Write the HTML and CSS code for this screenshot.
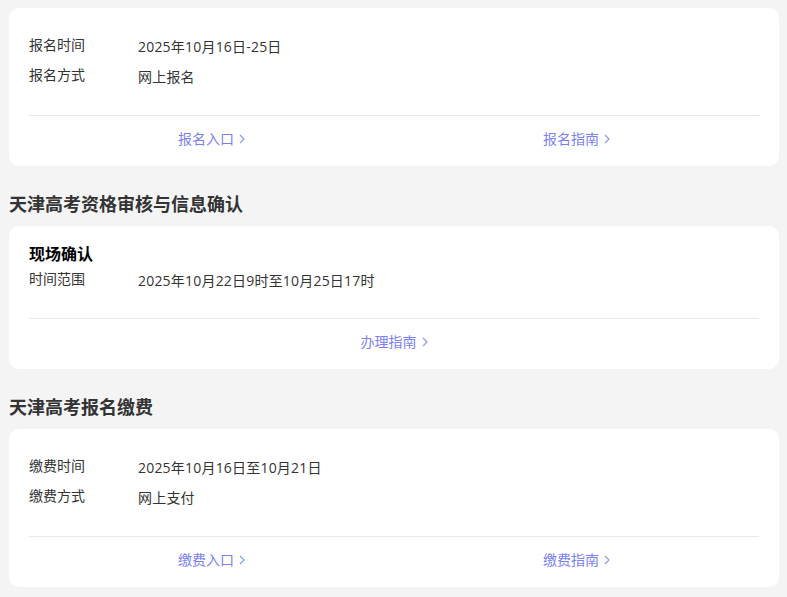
FILE: index.html
```html
<html>
<head>
<meta charset="utf-8">
<link rel="stylesheet" href="styles.css">
</head>
<body>

<div class="page">
    <div class="card">
        <div class="card-body">
            <div class="info-row">
                <div class="info-label">报名时间</div>
                <div class="info-value">2025年10月16日-25日</div>
            </div>
            <div class="info-row">
                <div class="info-label">报名方式</div>
                <div class="info-value">网上报名</div>
            </div>
        </div>
        <div class="card-links">
            <a class="card-link">报名入口<svg class="chevron" viewBox="0 0 6 10"><path d="M1 1 L5 5 L1 9"/></svg></a>
            <a class="card-link">报名指南<svg class="chevron" viewBox="0 0 6 10"><path d="M1 1 L5 5 L1 9"/></svg></a>
        </div>
    </div>

    <h2 class="section-title">天津高考资格审核与信息确认</h2>
    <div class="card">
        <div class="card-body card-body-titled">
            <div class="card-title">现场确认</div>
            <div class="info-row">
                <div class="info-label">时间范围</div>
                <div class="info-value">2025年10月22日9时至10月25日17时</div>
            </div>
        </div>
        <div class="card-links">
            <a class="card-link">办理指南<svg class="chevron" viewBox="0 0 6 10"><path d="M1 1 L5 5 L1 9"/></svg></a>
        </div>
    </div>

    <h2 class="section-title">天津高考报名缴费</h2>
    <div class="card">
        <div class="card-body">
            <div class="info-row">
                <div class="info-label">缴费时间</div>
                <div class="info-value">2025年10月16日至10月21日</div>
            </div>
            <div class="info-row">
                <div class="info-label">缴费方式</div>
                <div class="info-value">网上支付</div>
            </div>
        </div>
        <div class="card-links">
            <a class="card-link">缴费入口<svg class="chevron" viewBox="0 0 6 10"><path d="M1 1 L5 5 L1 9"/></svg></a>
            <a class="card-link">缴费指南<svg class="chevron" viewBox="0 0 6 10"><path d="M1 1 L5 5 L1 9"/></svg></a>
        </div>
    </div>
</div>

</body>
</html>
```

FILE: styles.css
```css
body {
    margin: 0;
    background-color: #f4f4f4;
    font-family: "Open Sans", "Noto Sans CJK SC", sans-serif;
    color: #333333;
}

.page {
    padding: 8px 8px 8px 9px;
}

.card {
    background-color: #ffffff;
    border-radius: 10px;
    padding: 0 20px;
}

.card-body {
    padding: 29px 0 28px;
    border-bottom: 1px solid #e8e8e8;
}

.card-body-titled {
    padding-top: 16px;
    padding-bottom: 27px;
}

.card-title {
    font-size: 16px;
    line-height: 24px;
    font-weight: bold;
    color: #000000;
    margin-bottom: 5px;
}

.info-row {
    display: flex;
    font-size: 14px;
    line-height: 20px;
}

.info-row + .info-row {
    margin-top: 10px;
}

.info-label {
    width: 109px;
    flex-shrink: 0;
    margin-top: -2px;
}

.info-value {
    letter-spacing: 0.2px;
}

.card-links {
    display: flex;
    padding: 13px 0 17px;
}

.card-link {
    flex: 1;
    display: flex;
    align-items: center;
    justify-content: center;
    font-size: 14px;
    line-height: 20px;
    color: #7a7ff2;
}

.chevron {
    width: 6px;
    height: 10px;
    margin-left: 5px;
    fill: none;
    stroke: #8a9cf0;
    stroke-width: 1.2;
}

.section-title {
    margin: 25px 0 9px;
    font-size: 18px;
    line-height: 26px;
    font-weight: bold;
    color: #333333;
}
```
